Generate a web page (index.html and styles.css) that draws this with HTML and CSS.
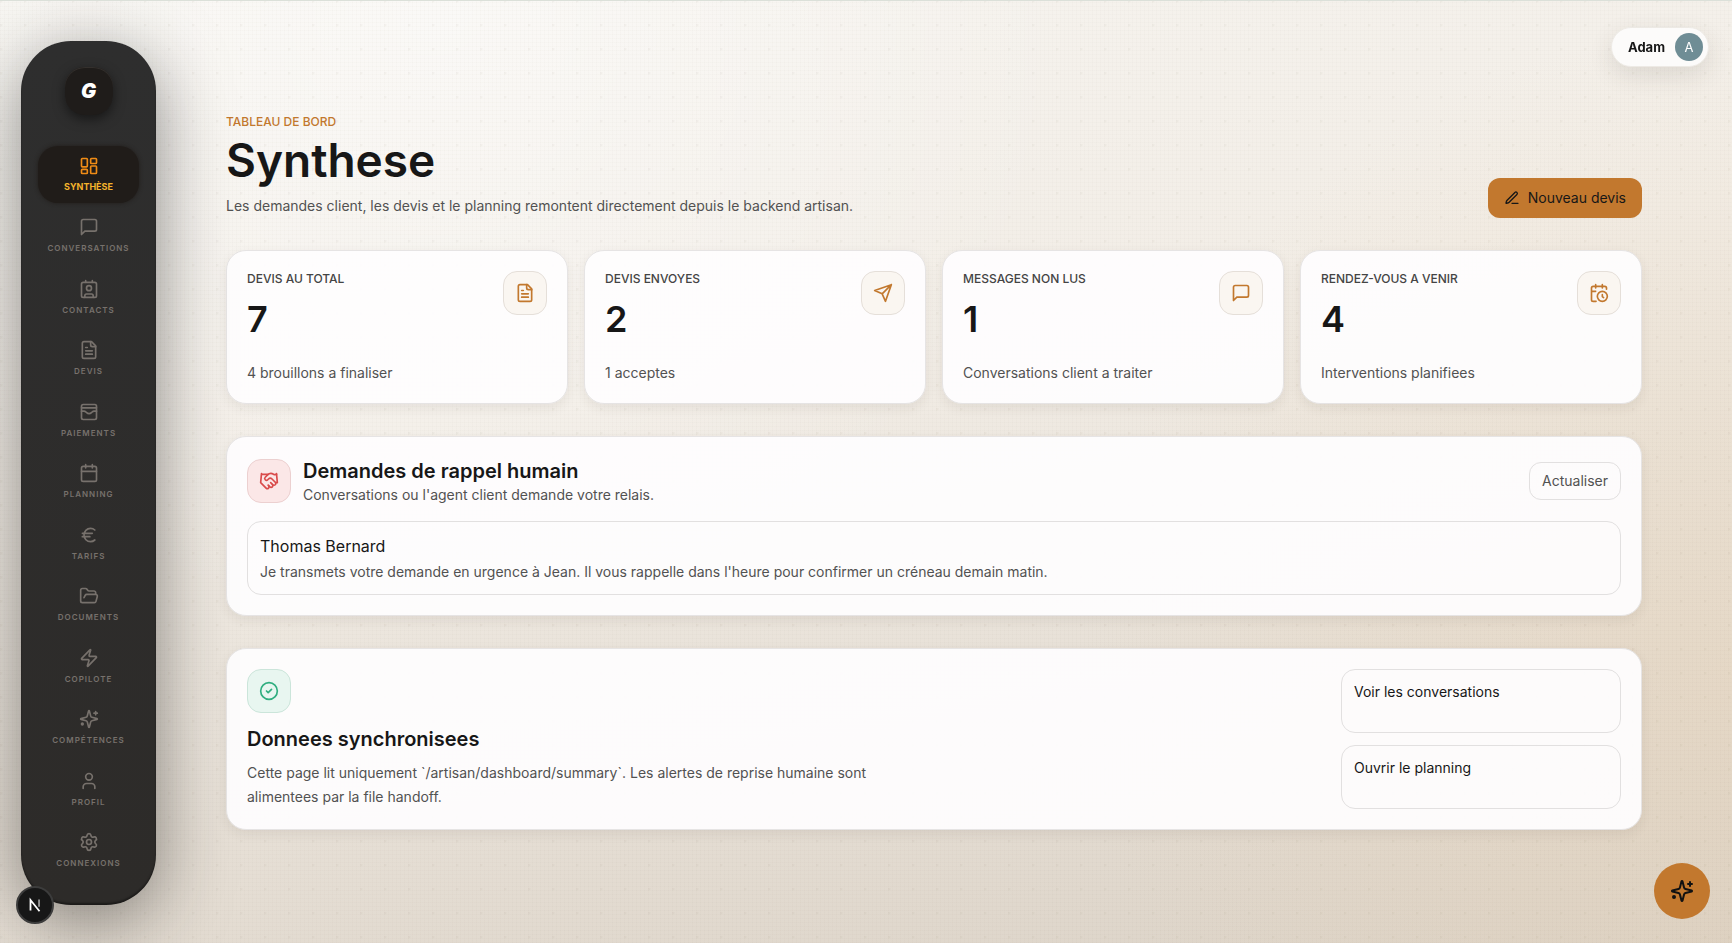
FILE: index.html
```
<!DOCTYPE html>
<html lang="fr">
<head>
  <meta charset="UTF-8">
  <title>Synthese</title>
  <link rel="stylesheet" href="styles.css">
</head>
<body>
  <svg class="sprite" aria-hidden="true">
    <symbol id="i-grid" viewBox="0 0 24 24"><rect x="3" y="3" width="7" height="10" rx="1"/><rect x="14" y="3" width="7" height="6" rx="1"/><rect x="14" y="12" width="7" height="9" rx="1"/><rect x="3" y="16" width="7" height="5" rx="1"/></symbol>
    <symbol id="i-message" viewBox="0 0 24 24"><path d="M21 15a2 2 0 0 1-2 2H7l-4 4V5a2 2 0 0 1 2-2h14a2 2 0 0 1 2 2z"/></symbol>
    <symbol id="i-contact" viewBox="0 0 24 24"><path d="M16 2v2M8 2v2M7 22v-2a2 2 0 0 1 2-2h6a2 2 0 0 1 2 2v2"/><circle cx="12" cy="11" r="3"/><rect x="3" y="4" width="18" height="18" rx="2"/></symbol>
    <symbol id="i-file" viewBox="0 0 24 24"><path d="M15 2H6a2 2 0 0 0-2 2v16a2 2 0 0 0 2 2h12a2 2 0 0 0 2-2V7Z"/><path d="M14 2v4a2 2 0 0 0 2 2h4M10 9H8M16 13H8M16 17H8"/></symbol>
    <symbol id="i-wallet" viewBox="0 0 24 24"><rect x="3" y="3" width="18" height="18" rx="2"/><path d="M3 11h3c.8 0 1.6.3 2.1.9l1.1.9c1.6 1.6 4.1 1.6 5.7 0l1.1-.9c.5-.5 1.3-.9 2.1-.9H21M3 7h18"/></symbol>
    <symbol id="i-calendar" viewBox="0 0 24 24"><path d="M8 2v4M16 2v4M3 10h18"/><rect x="3" y="4" width="18" height="18" rx="2"/></symbol>
    <symbol id="i-euro" viewBox="0 0 24 24"><path d="M4 10h12M4 14h9M19 6a7.7 7.7 0 0 0-5.2-2A7.9 7.9 0 0 0 6 12c0 4.4 3.5 8 7.8 8 2 0 3.8-.8 5.2-2"/></symbol>
    <symbol id="i-folder" viewBox="0 0 24 24"><path d="m6 14 1.5-2.9A2 2 0 0 1 9.24 10H20a2 2 0 0 1 1.94 2.5l-1.54 6a2 2 0 0 1-1.95 1.5H4a2 2 0 0 1-2-2V5a2 2 0 0 1 2-2h3.9a2 2 0 0 1 1.69.9l.81 1.2a2 2 0 0 0 1.67.9H18a2 2 0 0 1 2 2v2"/></symbol>
    <symbol id="i-zap" viewBox="0 0 24 24"><path d="M4 14a1 1 0 0 1-.78-1.63l9.9-10.2a.5.5 0 0 1 .86.46l-1.92 6.02A1 1 0 0 0 13 10h7a1 1 0 0 1 .78 1.63l-9.9 10.2a.5.5 0 0 1-.86-.46l1.92-6.02A1 1 0 0 0 11 14z"/></symbol>
    <symbol id="i-sparkles" viewBox="0 0 24 24"><path d="M9.937 15.5A2 2 0 0 0 8.5 14.063l-6.135-1.582a.5.5 0 0 1 0-.962L8.5 9.936A2 2 0 0 0 9.937 8.5l1.582-6.135a.5.5 0 0 1 .963 0L14.063 8.5A2 2 0 0 0 15.5 9.937l6.135 1.581a.5.5 0 0 1 0 .964L15.5 14.063a2 2 0 0 0-1.437 1.437l-1.582 6.135a.5.5 0 0 1-.963 0z"/><path d="M20 3v4M22 5h-4"/><circle cx="4" cy="18" r="1"/></symbol>
    <symbol id="i-user" viewBox="0 0 24 24"><path d="M19 21v-2a4 4 0 0 0-4-4H9a4 4 0 0 0-4 4v2"/><circle cx="12" cy="7" r="4"/></symbol>
    <symbol id="i-settings" viewBox="0 0 24 24"><path d="M9.671 4.136a2.34 2.34 0 0 1 4.659 0 2.34 2.34 0 0 0 3.319 1.915 2.34 2.34 0 0 1 2.33 4.033 2.34 2.34 0 0 0 0 3.831 2.34 2.34 0 0 1-2.33 4.033 2.34 2.34 0 0 0-3.319 1.915 2.34 2.34 0 0 1-4.659 0 2.34 2.34 0 0 0-3.32-1.915 2.34 2.34 0 0 1-2.33-4.033 2.34 2.34 0 0 0 0-3.831A2.34 2.34 0 0 1 6.35 6.051a2.34 2.34 0 0 0 3.319-1.915"/><circle cx="12" cy="12" r="3"/></symbol>
    <symbol id="i-send" viewBox="0 0 24 24"><path d="m22 2-7 20-4-9-9-4ZM22 2 11 13"/></symbol>
    <symbol id="i-calclock" viewBox="0 0 24 24"><path d="M21 7.5V6a2 2 0 0 0-2-2H5a2 2 0 0 0-2 2v14a2 2 0 0 0 2 2h3.5M16 2v4M8 2v4M3 10h5M17.500 17.500 16 16.300V14"/><circle cx="16" cy="16" r="6"/></symbol>
    <symbol id="i-pen" viewBox="0 0 24 24"><path d="M12 20h9M16.376 3.622a1 1 0 0 1 3.002 3.002L7.368 18.635a2 2 0 0 1-.855.506l-2.872.838a.5.5 0 0 1-.62-.62l.838-2.872a2 2 0 0 1 .506-.854z"/></symbol>
    <symbol id="i-handshake" viewBox="0 0 24 24"><path d="m11 17 2 2a1 1 0 1 0 3-3"/><path d="m14 14 2.5 2.5a1 1 0 1 0 3-3l-3.88-3.88a3 3 0 0 0-4.24 0l-.88.88a1 1 0 1 1-3-3l2.81-2.81a5.79 5.79 0 0 1 7.06-.87l.47.28a2 2 0 0 0 1.42.25L21 4"/><path d="m21 3 1 11h-2M3 3 2 14l6.5 6.5a1 1 0 1 0 3-3M3 4h8"/></symbol>
    <symbol id="i-check" viewBox="0 0 24 24"><circle cx="12" cy="12" r="10"/><path d="m9 12 2 2 4-4"/></symbol>
  </svg>

  <div class="layout">
    <aside class="sidebar">
      <a class="logo" href="#">G</a>
      <nav class="nav">
        <a class="nav-item active" href="#"><svg class="icon"><use href="#i-grid"/></svg>Synthèse</a>
        <a class="nav-item" href="#"><svg class="icon"><use href="#i-message"/></svg>Conversations</a>
        <a class="nav-item" href="#"><svg class="icon"><use href="#i-contact"/></svg>Contacts</a>
        <a class="nav-item" href="#"><svg class="icon"><use href="#i-file"/></svg>Devis</a>
        <a class="nav-item" href="#"><svg class="icon"><use href="#i-wallet"/></svg>Paiements</a>
        <a class="nav-item" href="#"><svg class="icon"><use href="#i-calendar"/></svg>Planning</a>
        <a class="nav-item" href="#"><svg class="icon"><use href="#i-euro"/></svg>Tarifs</a>
        <a class="nav-item" href="#"><svg class="icon"><use href="#i-folder"/></svg>Documents</a>
        <a class="nav-item" href="#"><svg class="icon"><use href="#i-zap"/></svg>Copilote</a>
        <a class="nav-item" href="#"><svg class="icon"><use href="#i-sparkles"/></svg>Compétences</a>
        <a class="nav-item" href="#"><svg class="icon"><use href="#i-user"/></svg>Profil</a>
        <a class="nav-item" href="#"><svg class="icon"><use href="#i-settings"/></svg>Connexions</a>
      </nav>
    </aside>

    <main class="main">
      <header class="page-header">
        <div>
          <p class="eyebrow">Tableau de bord</p>
          <h1>Synthese</h1>
          <p class="text lead">Les demandes client, les devis et le planning remontent directement depuis le backend artisan.</p>
        </div>
        <button class="btn-primary" type="button"><svg class="icon"><use href="#i-pen"/></svg>Nouveau devis</button>
      </header>

      <section class="stats">
        <article class="card stat">
          <div>
            <h2 class="stat-label">Devis au total</h2>
            <p class="stat-value">7</p>
            <p class="text">4 brouillons a finaliser</p>
          </div>
          <span class="tile"><svg class="icon"><use href="#i-file"/></svg></span>
        </article>
        <article class="card stat">
          <div>
            <h2 class="stat-label">Devis envoyes</h2>
            <p class="stat-value">2</p>
            <p class="text">1 acceptes</p>
          </div>
          <span class="tile"><svg class="icon"><use href="#i-send"/></svg></span>
        </article>
        <article class="card stat">
          <div>
            <h2 class="stat-label">Messages non lus</h2>
            <p class="stat-value">1</p>
            <p class="text">Conversations client a traiter</p>
          </div>
          <span class="tile"><svg class="icon"><use href="#i-message"/></svg></span>
        </article>
        <article class="card stat">
          <div>
            <h2 class="stat-label">Rendez-vous a venir</h2>
            <p class="stat-value">4</p>
            <p class="text">Interventions planifiees</p>
          </div>
          <span class="tile"><svg class="icon"><use href="#i-calclock"/></svg></span>
        </article>
      </section>

      <section class="card">
        <div class="panel-head">
          <span class="tile tile-red"><svg class="icon"><use href="#i-handshake"/></svg></span>
          <div class="panel-title">
            <h2>Demandes de rappel humain</h2>
            <p class="text">Conversations ou l'agent client demande votre relais.</p>
          </div>
          <button class="btn-outline" type="button">Actualiser</button>
        </div>
        <a class="request" href="#">
          <span class="request-name">Thomas Bernard</span>
          <span class="text">Je transmets votre demande en urgence à Jean. Il vous rappelle dans l'heure pour confirmer un créneau demain matin.</span>
        </a>
      </section>

      <section class="card sync">
        <div class="sync-info">
          <span class="tile tile-green"><svg class="icon"><use href="#i-check"/></svg></span>
          <h2>Donnees synchronisees</h2>
          <p class="text sync-text">Cette page lit uniquement `/artisan/dashboard/summary`. Les alertes de reprise humaine sont alimentees par la file handoff.</p>
        </div>
        <div class="sync-links">
          <a href="#">Voir les conversations</a>
          <a href="#">Ouvrir le planning</a>
        </div>
      </section>
    </main>
  </div>

  <button class="user" type="button">Adam <span class="avatar">A</span></button>
  <button class="fab" type="button" aria-label="Copilote"><svg class="icon"><use href="#i-sparkles"/></svg></button>
  <button class="dev-badge" type="button" aria-label="Outils de développement">
    <svg viewBox="0 0 20 20"><path d="M5 16V4.500L15 17" fill="none" stroke="#fff" stroke-width="2"/><path d="M14.500 4v8" stroke="#999" stroke-width="2"/></svg>
  </button>
</body>
</html>
```
FILE: styles.css
```
* {
  box-sizing: border-box;
}
body {
  margin: 0;
  min-height: 100vh;
  font-family: Inter, "Open Sans", sans-serif;
  font-size: 14px;
  line-height: 20px;
  color: #171717;
  border-top: 1px solid #dbe0d9;
  background:
    repeating-linear-gradient(0deg, rgba(90, 70, 40, 0.015) 0 1px, transparent 1px 4px),
    repeating-linear-gradient(90deg, rgba(90, 70, 40, 0.015) 0 1px, transparent 1px 4px),
    radial-gradient(circle at 1px 1px, rgba(90, 70, 40, 0.04) 0 1px, transparent 2px) 0 0 / 24px 24px,
    radial-gradient(circle at 100% 72%, rgba(232, 208, 176, 0.35), transparent 35%),
    radial-gradient(circle at 25% 0, rgba(255, 255, 255, 0.5), transparent 40%),
    linear-gradient(170deg, #f7f5f1 0%, #f2ede6 40%, #dbd2c6 100%);
}
h1, h2, p {
  margin: 0;
}
h2 {
  font-size: 20px;
  line-height: 28px;
  font-weight: 600;
}
a {
  color: inherit;
  text-decoration: none;
}
button {
  font: inherit;
  color: inherit;
  cursor: pointer;
}
.sprite {
  display: none;
}
.icon {
  width: 20px;
  height: 20px;
  fill: none;
  stroke: currentColor;
  stroke-width: 2;
  stroke-linecap: round;
  stroke-linejoin: round;
}
.layout {
  display: flex;
}

/* sidebar */
.sidebar {
  position: sticky;
  top: 41px;
  display: flex;
  flex-direction: column;
  align-items: center;
  flex: none;
  width: 135px;
  height: calc(100vh - 79px);
  margin: 40px 0 38px 21px;
  padding: 26px 17px 26px;
  border-radius: 50px;
  background: linear-gradient(#2e2e2e, #2d2b29);
  box-shadow: 0 16px 70px rgba(30, 28, 25, 0.5), inset 0 -2px 2px rgba(0, 0, 0, 0.4);
}
.logo {
  display: flex;
  align-items: center;
  justify-content: center;
  flex: none;
  width: 48px;
  height: 48px;
  margin-bottom: 31px;
  border-radius: 20px;
  background: #1f1c1a;
  box-shadow: 0 4px 12px rgba(0, 0, 0, 0.5), inset 0 1px 0 #34302d;
  color: #fff;
  font-size: 20px;
  font-weight: 900;
  font-style: italic;
}
.nav {
  display: flex;
  flex-direction: column;
  justify-content: space-between;
  flex: 1;
  width: 100%;
}
.nav-item {
  display: flex;
  flex-direction: column;
  align-items: center;
  gap: 5px;
  padding: 10px 0;
  border-radius: 20px;
  color: #77716c;
  font-size: 8px;
  line-height: 12px;
  font-weight: 600;
  letter-spacing: 1px;
  text-transform: uppercase;
}
.nav-item.active {
  background: #201c19;
  box-shadow: 0 0 4px #201c19;
  color: #f4b32c;
  font-size: 9px;
  font-weight: 700;
  letter-spacing: 0;
}
.nav-item.active .icon {
  color: #f08c16;
}

/* content */
.main {
  display: flex;
  flex-direction: column;
  gap: 32px;
  flex: 1;
  min-width: 0;
  padding: 111px 90px 40px 70px;
}
.text {
  color: #525252;
}
.page-header {
  display: flex;
  align-items: flex-end;
  justify-content: space-between;
}
.eyebrow {
  color: #c2782e;
  font-size: 12px;
  font-weight: 500;
  text-transform: uppercase;
}
h1 {
  margin: 0 0 6px;
  font-size: 46px;
  line-height: 56px;
  font-weight: 600;
}
.lead {
  line-height: 24px;
}
.btn-primary {
  display: flex;
  align-items: center;
  gap: 8px;
  height: 40px;
  padding: 0 16px;
  border: 0;
  border-radius: 12px;
  background: #c2782e;
}
.btn-primary .icon {
  width: 16px;
  height: 16px;
}
.card {
  padding: 20px;
  border: 1px solid #e6e4e4;
  border-radius: 20px;
  background: rgba(254, 253, 254, 0.94);
  box-shadow: 0 4px 12px rgba(60, 50, 40, 0.08);
}
.stats {
  display: grid;
  grid-template-columns: repeat(4, 1fr);
  gap: 16px;
}
.stat {
  display: flex;
  justify-content: space-between;
}
.stat-label {
  color: #444;
  font-size: 12px;
  line-height: 16px;
  font-weight: 500;
  text-transform: uppercase;
}
.stat-value {
  margin: 12px 0 24px;
  font-size: 36px;
  line-height: 40px;
  font-weight: 600;
}
.tile {
  display: flex;
  align-items: center;
  justify-content: center;
  flex: none;
  width: 44px;
  height: 44px;
  border: 1px solid #e5dfd9;
  border-radius: 14px;
  background: #faf6f1;
  color: #c2782e;
}
.tile-red {
  border-color: #ecd0d0;
  background: #fbe7e7;
  color: #d94b4b;
}
.tile-green {
  border-color: #cbe5da;
  background: #e8f6f0;
  color: #2fae7f;
}
.panel-head {
  display: flex;
  align-items: center;
  gap: 12px;
  margin-bottom: 16px;
}
.panel-title {
  flex: 1;
}
.btn-outline {
  height: 38px;
  padding: 0 12px;
  border: 1px solid #e2e0e0;
  border-radius: 12px;
  background: transparent;
  color: #525252;
}
.request {
  display: flex;
  flex-direction: column;
  gap: 4px;
  padding: 12px;
  border: 1px solid #e2e0e0;
  border-radius: 14px;
}
.request-name {
  font-size: 16px;
  line-height: 24px;
}
.sync {
  display: flex;
  justify-content: space-between;
}
.sync-info h2 {
  margin: 12px 0 8px;
}
.sync-text {
  max-width: 640px;
  line-height: 24px;
}
.sync-links {
  display: flex;
  flex-direction: column;
  gap: 12px;
  width: 280px;
}
.sync-links a {
  flex: 1;
  padding: 12px;
  border: 1px solid #e2e0e0;
  border-radius: 14px;
}

/* floating controls */
.user {
  position: fixed;
  top: 27px;
  right: 23px;
  display: flex;
  align-items: center;
  gap: 10px;
  height: 40px;
  padding: 0 5px 0 16px;
  border: 1px solid #edeae5;
  border-radius: 20px;
  background: #fcfbfa;
  box-shadow: 0 8px 24px rgba(60, 50, 40, 0.12);
  font-size: 13px;
  font-weight: 700;
}
.avatar {
  width: 28px;
  height: 28px;
  border-radius: 50%;
  background: #6f8d95;
  color: #fff;
  line-height: 28px;
  font-weight: 400;
}
.fab {
  position: fixed;
  right: 22px;
  bottom: 24px;
  display: flex;
  align-items: center;
  justify-content: center;
  width: 56px;
  height: 56px;
  border: 0;
  border-radius: 50%;
  background: #c2782e;
  color: #111;
}
.fab .icon {
  width: 24px;
  height: 24px;
}
.dev-badge {
  position: fixed;
  left: 16px;
  bottom: 19px;
  display: flex;
  align-items: center;
  justify-content: center;
  width: 38px;
  height: 38px;
  padding: 0;
  border: 2px solid #3c3c3c;
  border-radius: 50%;
  background: #171717;
}
.dev-badge svg {
  width: 18px;
  height: 18px;
}
```
